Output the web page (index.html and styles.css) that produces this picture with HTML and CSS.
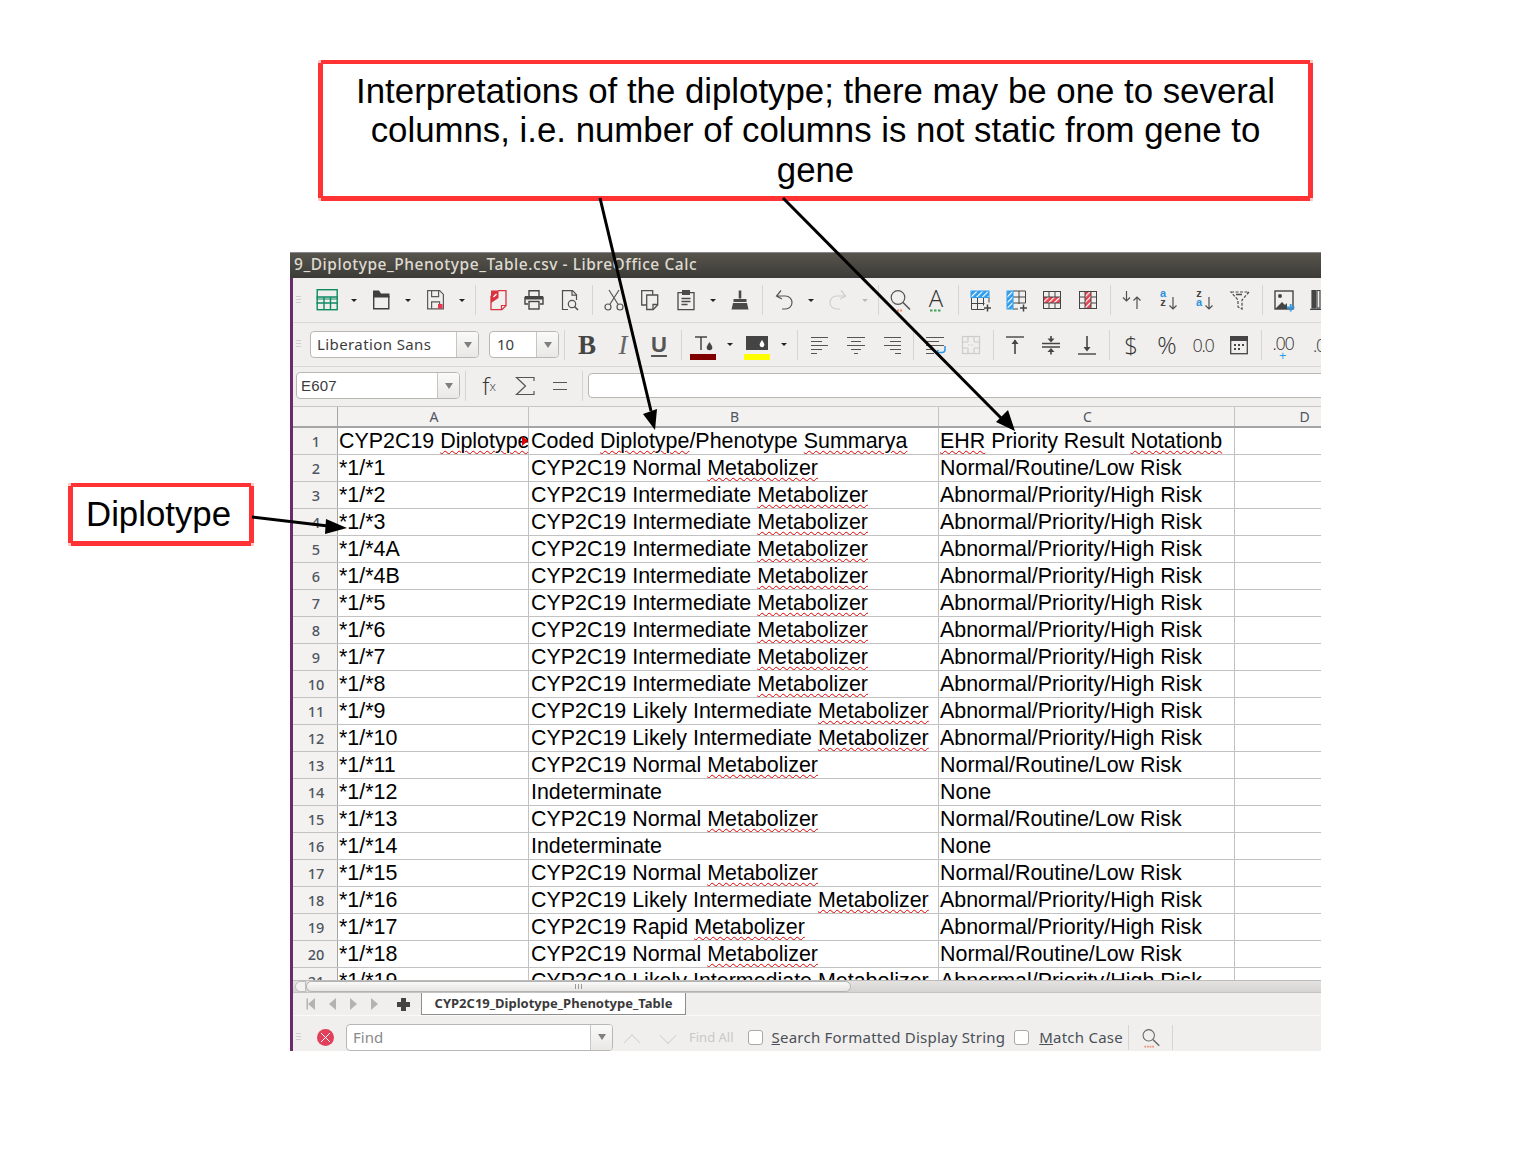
FILE: index.html
```html
<!DOCTYPE html>
<html lang="en">

<head>
    <meta charset="UTF-8">
    <title>Diplotype Phenotype Table</title>
    <link rel="stylesheet" href="styles.css">
</head>

<body>
    <svg class="defs" width="0" height="0">
        <defs>
            <pattern id="hatch-blue" width="4" height="4" patternUnits="userSpaceOnUse" patternTransform="rotate(45)">
                <rect width="4" height="4" fill="#2d9bec"/><rect width="1.2" height="4" fill="#fff"/>
            </pattern>
            <pattern id="hatch-red" width="4" height="4" patternUnits="userSpaceOnUse" patternTransform="rotate(45)">
                <rect width="4" height="4" fill="#e8414f"/><rect width="1.2" height="4" fill="#fff"/>
            </pattern>
            <symbol id="i-calc" viewBox="0 0 24 24"><g fill="none" stroke="#0c8b63" stroke-width="1.4"><rect x="2.200" y="1.700" width="20" height="20"/><path d="M1.500 9h21.500M1.500 15h21.500M9 9v13M15.500 9v13"/><path d="M1.500 11h21.500" stroke-width="1"/></g></symbol>
            <symbol id="i-folder" viewBox="0 0 24 24"><path d="M4 2.500h6l2 3h8.500v4H4z" fill="#3f3f3f"/><path d="M4.700 8v12.800h15.100V8" fill="none" stroke="#3f3f3f" stroke-width="1.400"/></symbol>
            <symbol id="i-save" viewBox="0 0 24 24"><g fill="none" stroke="#5a5a5a" stroke-width="1.200"><path d="M4.600 2.600h12l3.800 3.800v14.400H4.600z"/><path d="M8.600 2.600v6h7v-6M8.600 20.800v-7h8v7"/></g><rect x="15" y="16" width="4.500" height="4.500" fill="#e8344e"/></symbol>
            <symbol id="i-pdf" viewBox="0 0 24 24"><path d="M12 2.700h8v15l-4 4H5v-14" fill="none" stroke="#d8333f" stroke-width="1.300"/><path d="M5 2.500h7.500v7.500L5 15z" fill="#d8333f"/><path d="M7.500 9l3-3" stroke="#fff" stroke-width="1.200"/><path d="M15.500 21.500v-4h4.500" fill="none" stroke="#d8333f" stroke-width="1.200"/></symbol>
            <symbol id="i-print" viewBox="0 0 24 24"><g fill="none" stroke="#454545" stroke-width="1.400"><path d="M7 8V2.800h10V8"/><path d="M6 16H3V9.500h18V16h-3"/><rect x="7" y="13.500" width="10" height="7.500" fill="#f0efed"/></g><rect x="3" y="8" width="18" height="3.500" fill="#454545"/></symbol>
            <symbol id="i-preview" viewBox="0 0 24 24"><g fill="none" stroke="#4e4e4e" stroke-width="1.200"><path d="M10 21.500H4.500V2.700h10l4 4V12"/><path d="M14 2.700v4.500h4.500"/><circle cx="14" cy="16" r="3.700"/><path d="M16.700 18.700l3.300 3.300" stroke-width="1.600"/></g></symbol>
            <symbol id="i-cut" viewBox="0 0 24 24"><g fill="none" stroke="#555" stroke-width="1.200"><circle cx="6" cy="19" r="3"/><circle cx="18" cy="19" r="3"/><path d="M7.800 16.500L17 2M16.200 16.500L7 2"/></g></symbol>
            <symbol id="i-copy" viewBox="0 0 24 24"><g fill="none" stroke="#505050" stroke-width="1.300"><path d="M8.500 17H3.700V2.700h11v4"/><path d="M8.700 7h11v10l-4.500 4.500H8.700z" fill="#f0efed"/><path d="M15 21v-4.500h4.500"/></g></symbol>
            <symbol id="i-paste" viewBox="0 0 24 24"><g fill="none" stroke="#4b4b4b" stroke-width="1.300"><path d="M8 4.700H4v17h16v-17h-4"/><path d="M7.500 10.500h9M7.500 13.500h9M7.500 16.500h6"/></g><rect x="8" y="2" width="8" height="5" fill="#4b4b4b"/></symbol>
            <symbol id="i-brush" viewBox="0 0 24 24"><path d="M10.700 2.500h2.600v8h-2.600z" fill="#4a4a4a"/><path d="M5.500 11h13v3h-13z" fill="#4a4a4a"/><path d="M5 15h14l1.500 6.500h-17z" fill="#4a4a4a"/></symbol>
            <symbol id="i-undo" viewBox="0 0 24 24"><path d="M9 2.500L4.500 8 10 11M5 8h8.500a6.500 6.500 0 0 1 0 13H10" fill="none" stroke="#555" stroke-width="1.200"/></symbol>
            <symbol id="i-redo" viewBox="0 0 24 24"><path d="M15 2.500L19.500 8 14 11M19 8h-8.500a6.500 6.500 0 0 0 0 13H14" fill="none" stroke="#cfcecc" stroke-width="1.200"/></symbol>
            <symbol id="i-find" viewBox="0 0 24 24"><g fill="none" stroke="#555" stroke-width="1.200"><circle cx="10" cy="9.500" r="6.800"/><path d="M15 14.500l7 7" stroke-width="1.600"/></g><path d="M6 22.500h2M9 22.500h2M12 22.500h2" stroke="#f08a6a" stroke-width="2"/></symbol>
            <symbol id="i-spell" viewBox="0 0 24 24"><text x="12" y="19" text-anchor="middle" class="svg-a">A</text><path d="M6 22.500h2.500M10 22.500h2.500M14 22.500h2.500" stroke="#3fa35a" stroke-width="2"/></symbol>
            <symbol id="i-rowins" viewBox="0 0 24 24"><g fill="none" stroke="#454545" stroke-width="1"><path d="M3.500 9.500v12h13M3.500 15.500h13M9.500 9.500v12M15.500 9.500v8M21 9.500v5"/></g><rect x="3" y="3" width="18" height="6.500" fill="url(#hatch-blue)" stroke="#2d9bec"/><path d="M16 20h7M19.500 16.500v7" stroke="#454545" stroke-width="1.500"/></symbol>
            <symbol id="i-colins" viewBox="0 0 24 24"><g fill="none" stroke="#454545" stroke-width="1"><path d="M9 3h12.500v12M9 9h12.500M9 15h12.500M15 3v13M9 21h5"/></g><rect x="3" y="3" width="6" height="18" fill="url(#hatch-blue)" stroke="#2d9bec"/><path d="M16 20h7M19.500 16.500v7" stroke="#454545" stroke-width="1.500"/></symbol>
            <symbol id="i-delrow" viewBox="0 0 24 24"><rect x="3" y="9" width="18" height="6" fill="url(#hatch-red)"/><g fill="none" stroke="#454545" stroke-width="1"><rect x="3.500" y="3.500" width="17" height="17"/><path d="M3.500 9h17M3.500 15h17M9 3.500V9M15 3.500V9M9 15v5.500M15 15v5.500"/></g></symbol>
            <symbol id="i-delcol" viewBox="0 0 24 24"><rect x="9" y="3" width="6" height="18" fill="url(#hatch-red)"/><g fill="none" stroke="#454545" stroke-width="1"><rect x="3.500" y="3.500" width="17" height="17"/><path d="M9 3.500v17M15 3.500v17M3.500 9H9M3.500 15H9M15 9h5.500M15 15h5.500"/></g></symbol>
            <symbol id="i-sort" viewBox="0 0 24 24"><path d="M6.500 3v10M3 9.500L6.500 13 10 9.500M17 21V9M13.500 12.500L17 9l3.500 3.500" fill="none" stroke="#505050" stroke-width="1.200"/></symbol>
            <symbol id="i-az" viewBox="0 0 24 24"><text x="7" y="9" text-anchor="middle" class="svg-s blue">a</text><text x="7" y="18" text-anchor="middle" class="svg-s">z</text><path d="M17 9v12M13.500 17.500L17 21l3.500-3.500" fill="none" stroke="#505050" stroke-width="1.200"/></symbol>
            <symbol id="i-za" viewBox="0 0 24 24"><text x="7" y="9" text-anchor="middle" class="svg-s">z</text><text x="7" y="18" text-anchor="middle" class="svg-s blue">a</text><path d="M17 9v12M13.500 17.500L17 21l3.500-3.500" fill="none" stroke="#505050" stroke-width="1.200"/></symbol>
            <symbol id="i-filter" viewBox="0 0 24 24"><path d="M3 4h18l-7 8v9l-4-2v-7z" fill="none" stroke="#4b4b4b" stroke-width="1.200" stroke-dasharray="3 1.500"/><path d="M8 6.500l6 0" stroke="#4b4b4b" stroke-width="1.500"/></symbol>
            <symbol id="i-image" viewBox="0 0 24 24"><rect x="3" y="3" width="18" height="18" fill="none" stroke="#454545" stroke-width="1.400"/><circle cx="8" cy="8" r="2" fill="#454545"/><path d="M3 21l7-7 3 3 2-2v6z" fill="#454545"/><path d="M15 19.500h7.500M18.700 16v7.500" stroke="#2d9bec" stroke-width="1.800"/></symbol>
            <symbol id="i-chart" viewBox="0 0 24 24"><path d="M4 2.500h3.500V20H4zM9 2.500h3V20H9zM2 21.300h20" fill="none" stroke="#454545" stroke-width="1.200"/><path d="M4 2.500h3.500V20H4z" fill="#454545"/></symbol>
            <symbol id="i-fcolor" viewBox="0 0 24 24"><path d="M4 4h12M10 4v13" fill="none" stroke="#454545" stroke-width="1.500"/><path d="M18.500 9c2 3 2.800 4.300 2.800 5.500a2.800 2.800 0 0 1-5.600 0c0-1.200.8-2.500 2.800-5.500z" fill="#454545"/></symbol>
            <symbol id="i-bcolor" viewBox="0 0 24 24"><rect x="1" y="3" width="22" height="14" fill="#444"/><path d="M17 7c1.700 2.500 2.400 3.700 2.400 4.800a2.400 2.400 0 0 1-4.800 0c0-1.100.7-2.300 2.400-4.800z" fill="#fff"/></symbol>
            <symbol id="i-left" viewBox="0 0 24 24"><path d="M3 4.500h17M3 8.500h11M3 12.500h17M3 16.500h11M3 20.500h6" fill="none" stroke="#555" stroke-width="1.200"/></symbol>
            <symbol id="i-center" viewBox="0 0 24 24"><path d="M3 4.500h18M7 8.500h10M3 12.500h18M7 16.500h10M10 20.500h4" fill="none" stroke="#555" stroke-width="1.200"/></symbol>
            <symbol id="i-right" viewBox="0 0 24 24"><path d="M4 4.500h17M10 8.500h11M4 12.500h17M10 16.500h11M15 20.500h6" fill="none" stroke="#555" stroke-width="1.200"/></symbol>
            <symbol id="i-wrap" viewBox="0 0 24 24"><path d="M3 4.500h18M3 8.500h13M3 12.500h18M3 16.500h8M3 20.500h8" fill="none" stroke="#555" stroke-width="1.200"/><path d="M13 19.500h6a3 3 0 0 0 3-3V13M15.500 17L13 19.500l2.500 2.500" fill="none" stroke="#2d9bec" stroke-width="1.600"/></symbol>
            <symbol id="i-merge" viewBox="0 0 24 24"><g fill="none" stroke="#cdccca" stroke-width="1.200"><rect x="3.500" y="3.500" width="17" height="17"/><path d="M3.500 9H9M15 9h5.500M3.500 15H9M15 15h5.500M9 3.500V9M15 3.500V9M9 15v5.500M15 15v5.500"/><path d="M9 12h6" stroke-dasharray="1.500 1.500"/></g></symbol>
            <symbol id="i-top" viewBox="0 0 24 24"><path d="M3 4h18" stroke="#454545" stroke-width="1.400"/><path d="M12 21V7" stroke="#454545" stroke-width="1.600"/><path d="M12 6.500l3.500 4.500h-7z" fill="#454545"/></symbol>
            <symbol id="i-middle" viewBox="0 0 24 24"><path d="M3 10.500h18M3 14h18" stroke="#454545" stroke-width="1.400"/><path d="M12 3v5M12 16.500v5" stroke="#454545" stroke-width="1.600"/><path d="M12 9.500L8.500 5.500h7zM12 15l3.500 4h-7z" fill="#454545"/></symbol>
            <symbol id="i-bottom" viewBox="0 0 24 24"><path d="M3 21h18" stroke="#454545" stroke-width="1.400"/><path d="M12 3v13" stroke="#454545" stroke-width="1.600"/><path d="M12 18.500L8.500 14h7z" fill="#454545"/></symbol>
            <symbol id="i-date" viewBox="0 0 24 24"><rect x="3.700" y="3.700" width="16.600" height="17" fill="none" stroke="#454545" stroke-width="1.300"/><path d="M3 3h18v5H3z" fill="#454545"/><path d="M7 11h2v2H7zM11 11h2v2h-2zM15 11h2v2h-2zM7 15h2v2H7zM11 15h2v2h-2z" fill="#454545"/></symbol>
            <symbol id="i-search" viewBox="0 0 24 24"><g fill="none" stroke="#666" stroke-width="1.200"><circle cx="10" cy="9.500" r="6.500"/><path d="M15 14.500l7 7" stroke-width="1.600"/></g><path d="M5 22.500h2M8 22.500h2M11 22.500h2M14 22.500h2" stroke="#f0907a" stroke-width="2"/></symbol>
            <symbol id="i-sigma" viewBox="0 0 24 24"><path d="M21 7V3.500H3.500l9 8.500-9 8.500H21V17" fill="none" stroke="#555" stroke-width="1.200"/></symbol>
            <symbol id="i-equals" viewBox="0 0 24 24"><path d="M5 8.500h14M5 15.500h14" fill="none" stroke="#555" stroke-width="1.200"/></symbol>
        </defs>
    </svg>

    <div class="callout callout-top">Interpretations of the diplotype; there may be one to several columns, i.e. number of columns is not static from gene to gene</div>
    <div class="callout callout-left">Diplotype</div>

    <div class="window">
        <div class="titlebar">9_Diplotype_Phenotype_Table.csv - LibreOffice Calc</div>

        <div class="main">
            <div class="toolbar">
                <span class="grip"></span>
                <span class="btn first"><svg class="ic"><use href="#i-calc"/></svg></span><span class="dd"></span>
                <span class="btn"><svg class="ic"><use href="#i-folder"/></svg></span><span class="dd"></span>
                <span class="btn"><svg class="ic"><use href="#i-save"/></svg></span><span class="dd"></span>
                <span class="sep w9"></span>
                <span class="btn"><svg class="ic"><use href="#i-pdf"/></svg></span>
                <span class="btn"><svg class="ic"><use href="#i-print"/></svg></span>
                <span class="btn"><svg class="ic"><use href="#i-preview"/></svg></span>
                <span class="sep"></span>
                <span class="btn"><svg class="ic"><use href="#i-cut"/></svg></span>
                <span class="btn"><svg class="ic"><use href="#i-copy"/></svg></span>
                <span class="btn"><svg class="ic"><use href="#i-paste"/></svg></span><span class="dd"></span>
                <span class="btn"><svg class="ic"><use href="#i-brush"/></svg></span>
                <span class="sep"></span>
                <span class="btn"><svg class="ic"><use href="#i-undo"/></svg></span><span class="dd"></span>
                <span class="btn"><svg class="ic"><use href="#i-redo"/></svg></span><span class="dd off"></span>
                <span class="sep"></span>
                <span class="btn"><svg class="ic"><use href="#i-find"/></svg></span>
                <span class="btn"><svg class="ic"><use href="#i-spell"/></svg></span>
                <span class="sep"></span>
                <span class="btn"><svg class="ic"><use href="#i-rowins"/></svg></span>
                <span class="btn"><svg class="ic"><use href="#i-colins"/></svg></span>
                <span class="btn"><svg class="ic"><use href="#i-delrow"/></svg></span>
                <span class="btn"><svg class="ic"><use href="#i-delcol"/></svg></span>
                <span class="sep"></span>
                <span class="btn"><svg class="ic"><use href="#i-sort"/></svg></span>
                <span class="btn"><svg class="ic"><use href="#i-az"/></svg></span>
                <span class="btn"><svg class="ic"><use href="#i-za"/></svg></span>
                <span class="btn"><svg class="ic"><use href="#i-filter"/></svg></span>
                <span class="sep"></span>
                <span class="btn"><svg class="ic"><use href="#i-image"/></svg></span>
                <span class="btn"><svg class="ic"><use href="#i-chart"/></svg></span>
            </div>

            <div class="toolbar second">
                <span class="grip"></span>
                <span class="combo font-combo"><span class="combo-text">Liberation Sans</span><span class="combo-arrow"></span></span>
                <span class="combo size-combo"><span class="combo-text">10</span><span class="combo-arrow"></span></span>
                <span class="sep w10"></span>
                <span class="btn glyph bold">B</span>
                <span class="btn glyph italic">I</span>
                <span class="btn glyph under">U</span>
                <span class="sep"></span>
                <span class="btn swatch dark-red"><svg class="ic"><use href="#i-fcolor"/></svg></span><span class="dd"></span>
                <span class="btn swatch yellow"><svg class="ic"><use href="#i-bcolor"/></svg></span><span class="dd"></span>
                <span class="sep w9"></span>
                <span class="btn"><svg class="ic"><use href="#i-left"/></svg></span>
                <span class="btn"><svg class="ic"><use href="#i-center"/></svg></span>
                <span class="btn"><svg class="ic"><use href="#i-right"/></svg></span>
                <span class="sep w7"></span>
                <span class="btn"><svg class="ic"><use href="#i-wrap"/></svg></span>
                <span class="btn"><svg class="ic"><use href="#i-merge"/></svg></span>
                <span class="sep"></span>
                <span class="btn"><svg class="ic"><use href="#i-top"/></svg></span>
                <span class="btn"><svg class="ic"><use href="#i-middle"/></svg></span>
                <span class="btn"><svg class="ic"><use href="#i-bottom"/></svg></span>
                <span class="sep"></span>
                <span class="btn glyph dollar">$</span>
                <span class="btn glyph percent">%</span>
                <span class="btn glyph number">0.0</span>
                <span class="btn"><svg class="ic"><use href="#i-date"/></svg></span>
                <span class="sep"></span>
                <span class="btn glyph number plus">.00</span>
                <span class="btn glyph number">.0</span>
            </div>

            <div class="formulabar">
                <span class="combo name-combo"><span class="combo-text">E607</span><span class="combo-arrow"></span></span>
                <span class="sep w11"></span>
                <span class="btn glyph fx">f<sub>x</sub></span>
                <span class="btn"><svg class="ic"><use href="#i-sigma"/></svg></span>
                <span class="btn narrow"><svg class="ic"><use href="#i-equals"/></svg></span>
                <span class="sep w11"></span>
                <span class="formula-input"></span>
            </div>

            <div class="sheet">
                <div class="row head"><div class="rowhead"></div><div class="cell">A</div><div class="cell">B</div><div class="cell">C</div><div class="cell">D</div></div>
                <div class="rows">
                    <div class="row"><div class="rowhead">1</div><div class="cell">CYP2C19 <em>Diplotype</em><i class="overflow-mark"></i></div><div class="cell pad">Coded <em>Diplotype</em>/Phenotype <em>Summarya</em></div><div class="cell"><em>EHR</em> Priority Result <em>Notationb</em></div><div class="cell"></div></div>
                    <div class="row"><div class="rowhead">2</div><div class="cell">*1/*1</div><div class="cell pad">CYP2C19 Normal <em>Metabolizer</em></div><div class="cell">Normal/Routine/Low Risk</div><div class="cell"></div></div>
                    <div class="row"><div class="rowhead">3</div><div class="cell">*1/*2</div><div class="cell pad">CYP2C19 Intermediate <em>Metabolizer</em></div><div class="cell">Abnormal/Priority/High Risk</div><div class="cell"></div></div>
                    <div class="row"><div class="rowhead">4</div><div class="cell">*1/*3</div><div class="cell pad">CYP2C19 Intermediate <em>Metabolizer</em></div><div class="cell">Abnormal/Priority/High Risk</div><div class="cell"></div></div>
                    <div class="row"><div class="rowhead">5</div><div class="cell">*1/*4A</div><div class="cell pad">CYP2C19 Intermediate <em>Metabolizer</em></div><div class="cell">Abnormal/Priority/High Risk</div><div class="cell"></div></div>
                    <div class="row"><div class="rowhead">6</div><div class="cell">*1/*4B</div><div class="cell pad">CYP2C19 Intermediate <em>Metabolizer</em></div><div class="cell">Abnormal/Priority/High Risk</div><div class="cell"></div></div>
                    <div class="row"><div class="rowhead">7</div><div class="cell">*1/*5</div><div class="cell pad">CYP2C19 Intermediate <em>Metabolizer</em></div><div class="cell">Abnormal/Priority/High Risk</div><div class="cell"></div></div>
                    <div class="row"><div class="rowhead">8</div><div class="cell">*1/*6</div><div class="cell pad">CYP2C19 Intermediate <em>Metabolizer</em></div><div class="cell">Abnormal/Priority/High Risk</div><div class="cell"></div></div>
                    <div class="row"><div class="rowhead">9</div><div class="cell">*1/*7</div><div class="cell pad">CYP2C19 Intermediate <em>Metabolizer</em></div><div class="cell">Abnormal/Priority/High Risk</div><div class="cell"></div></div>
                    <div class="row"><div class="rowhead">10</div><div class="cell">*1/*8</div><div class="cell pad">CYP2C19 Intermediate <em>Metabolizer</em></div><div class="cell">Abnormal/Priority/High Risk</div><div class="cell"></div></div>
                    <div class="row"><div class="rowhead">11</div><div class="cell">*1/*9</div><div class="cell pad">CYP2C19 Likely Intermediate <em>Metabolizer</em></div><div class="cell">Abnormal/Priority/High Risk</div><div class="cell"></div></div>
                    <div class="row"><div class="rowhead">12</div><div class="cell">*1/*10</div><div class="cell pad">CYP2C19 Likely Intermediate <em>Metabolizer</em></div><div class="cell">Abnormal/Priority/High Risk</div><div class="cell"></div></div>
                    <div class="row"><div class="rowhead">13</div><div class="cell">*1/*11</div><div class="cell pad">CYP2C19 Normal <em>Metabolizer</em></div><div class="cell">Normal/Routine/Low Risk</div><div class="cell"></div></div>
                    <div class="row"><div class="rowhead">14</div><div class="cell">*1/*12</div><div class="cell pad">Indeterminate</div><div class="cell">None</div><div class="cell"></div></div>
                    <div class="row"><div class="rowhead">15</div><div class="cell">*1/*13</div><div class="cell pad">CYP2C19 Normal <em>Metabolizer</em></div><div class="cell">Normal/Routine/Low Risk</div><div class="cell"></div></div>
                    <div class="row"><div class="rowhead">16</div><div class="cell">*1/*14</div><div class="cell pad">Indeterminate</div><div class="cell">None</div><div class="cell"></div></div>
                    <div class="row"><div class="rowhead">17</div><div class="cell">*1/*15</div><div class="cell pad">CYP2C19 Normal <em>Metabolizer</em></div><div class="cell">Normal/Routine/Low Risk</div><div class="cell"></div></div>
                    <div class="row"><div class="rowhead">18</div><div class="cell">*1/*16</div><div class="cell pad">CYP2C19 Likely Intermediate <em>Metabolizer</em></div><div class="cell">Abnormal/Priority/High Risk</div><div class="cell"></div></div>
                    <div class="row"><div class="rowhead">19</div><div class="cell">*1/*17</div><div class="cell pad">CYP2C19 Rapid <em>Metabolizer</em></div><div class="cell">Abnormal/Priority/High Risk</div><div class="cell"></div></div>
                    <div class="row"><div class="rowhead">20</div><div class="cell">*1/*18</div><div class="cell pad">CYP2C19 Normal <em>Metabolizer</em></div><div class="cell">Normal/Routine/Low Risk</div><div class="cell"></div></div>
                    <div class="row"><div class="rowhead">21</div><div class="cell">*1/*19</div><div class="cell pad">CYP2C19 Likely Intermediate <em>Metabolizer</em></div><div class="cell">Abnormal/Priority/High Risk</div><div class="cell"></div></div>
                </div>
            </div>

            <div class="scrollbar">
                <span class="scroll-left"></span>
                <span class="scroll-thumb"></span>
            </div>

            <div class="tabbar">
                <div class="tab-nav">
                    <span class="nav nav-first"></span>
                    <span class="nav nav-prev"></span>
                    <span class="nav nav-next"></span>
                    <span class="nav nav-last"></span>
                    <span class="nav-add"></span>
                </div>
                <div class="tab">CYP2C19_Diplotype_Phenotype_Table</div>
            </div>

            <div class="findbar">
                <span class="grip"></span>
                <span class="close-find"></span>
                <span class="combo find-combo"><span class="combo-text">Find</span><span class="combo-arrow"></span></span>
                <span class="chev up"></span>
                <span class="chev down"></span>
                <span class="find-all">Find All</span>
                <span class="check"></span>
                <span class="find-label"><u>S</u>earch Formatted Display String</span>
                <span class="check second-check"></span>
                <span class="find-label"><u>M</u>atch Case</span>
                <span class="sep small w11"></span>
                <svg class="ic search"><use href="#i-search"/></svg>
                <span class="sep small w11"></span>
            </div>
        </div>
    </div>

    <svg class="arrows" width="1536" height="1152" viewBox="0 0 1536 1152">
        <g stroke="#000" stroke-width="3" fill="none">
            <path d="M600 198L651 411"/>
            <path d="M783 198L1003 420"/>
            <path d="M252 517L328 526"/>
        </g>
        <g fill="#000">
            <path d="M655 430L643 414L657 409z"/>
            <path d="M1015 431L996 422L1008 410z"/>
            <path d="M347 528L326 519L325 534z"/>
        </g>
    </svg>
</body>

</html>
```

FILE: styles.css
```css
html,
body {
    margin: 0;
    padding: 0;
    background: #fff;
}

body {
    position: relative;
    width: 1536px;
    height: 1152px;
    overflow: hidden;
    font-family: "Liberation Sans", Arial, sans-serif;
}

.defs {
    position: absolute;
}

.svg-a {
    font-family: "Open Sans", sans-serif;
    font-weight: 300;
    font-size: 24px;
    fill: #333;
}

.svg-s {
    font-family: "Liberation Sans", sans-serif;
    font-size: 11px;
    font-weight: bold;
    fill: #444;
}

.svg-s.blue {
    fill: #2d8fe0;
}

/* red note boxes */
.callout {
    position: absolute;
    box-sizing: border-box;
    background: #fff;
    border: 5px solid #ff3333;
    border-top-width: 4px;
    color: #000;
    font-size: 34.800px;
    line-height: 39.400px;
    z-index: 2;
}

/* pale drag handles left on the corners of the shape */
.callout::after {
    content: "";
    position: absolute;
    left: -5px;
    right: -5px;
    top: -4px;
    bottom: -5px;
    background:
        linear-gradient(#ffc9c9, #ffc9c9) 0 0 / 3px 3px no-repeat,
        linear-gradient(#ffc9c9, #ffc9c9) 100% 0 / 3px 3px no-repeat,
        linear-gradient(#ffc9c9, #ffc9c9) 0 100% / 3px 3px no-repeat,
        linear-gradient(#ffc9c9, #ffc9c9) 100% 100% / 3px 3px no-repeat;
}

.callout-top {
    left: 318px;
    top: 60px;
    width: 995px;
    height: 141px;
    padding: 7px 24px 0;
    text-align: center;
}

.callout-left {
    left: 68px;
    top: 483px;
    width: 186px;
    height: 63px;
    padding: 7px 0 0 13px;
}

.arrows {
    position: absolute;
    left: 0;
    top: 0;
    z-index: 3;
    pointer-events: none;
}

/* the calc window */
.window {
    position: absolute;
    left: 290px;
    top: 252px;
    width: 1031px;
    height: 799px;
    overflow: hidden;
    display: flex;
    flex-direction: column;
}

.titlebar {
    height: 26px;
    flex: none;
    box-sizing: border-box;
    padding: 1px 0 0 4px;
    background: linear-gradient(#57544c, #3c3b37);
    border-top: 1px solid #888;
    color: #dfdbd2;
    font-family: "Noto Sans", sans-serif;
    font-size: 15.500px;
    font-weight: 500;
    line-height: 21px;
    letter-spacing: 0.55px;
    white-space: nowrap;
}

.main {
    flex: 1;
    min-height: 0;
    display: flex;
    flex-direction: column;
    border-left: 3px solid #6b2a6f;
    background: #f0efed;
    color: #454545;
    font-family: "Noto Sans", sans-serif;
}

.toolbar,
.formulabar,
.findbar {
    flex: none;
    display: flex;
    align-items: center;
    box-sizing: border-box;
    white-space: nowrap;
}

.toolbar {
    height: 45px;
    border-bottom: 1px solid #d9d8d6;
}

.toolbar.second {
    height: 44px;
}

.grip {
    flex: none;
    width: 5px;
    height: 9px;
    margin: 0 8px 0 3px;
    background: repeating-linear-gradient(#cfcecc 0 1px, transparent 1px 3px);
}

.toolbar.second .grip {
    margin-right: 9px;
}

.btn {
    flex: none;
    width: 36px;
    height: 30px;
    display: flex;
    align-items: center;
    justify-content: center;
    position: relative;
}

.btn.narrow {
    width: 34px;
}

.ic {
    width: 24px;
    height: 24px;
    flex: none;
}

.dd {
    flex: none;
    width: 18px;
    height: 30px;
    display: flex;
    align-items: center;
    justify-content: center;
}

.dd::after {
    content: "";
    border-left: 3.500px solid transparent;
    border-right: 3.500px solid transparent;
    border-top: 3.500px solid #222;
}

.dd.off::after {
    border-top-color: #bbb;
}

.sep {
    flex: none;
    width: 8px;
    height: 30px;
    display: flex;
    justify-content: center;
}

.sep::after {
    content: "";
    width: 1px;
    height: 100%;
    background: #d6d5d3;
}

.sep.w7 { width: 7px; }
.sep.w9 { width: 9px; }
.sep.w10 { width: 10px; }
.sep.w11 { width: 11px; }

/* drop down boxes */
.combo {
    flex: none;
    box-sizing: border-box;
    height: 27px;
    display: flex;
    background: #fff;
    border: 1px solid #b8b7b3;
    border-radius: 4px;
    font-size: 15px;
    line-height: 25px;
    color: #3c3c3c;
}

.combo-text {
    flex: 1;
    padding-left: 6px;
}

.combo-arrow {
    flex: none;
    width: 21px;
    display: flex;
    align-items: center;
    justify-content: center;
    background: linear-gradient(#fafafa, #e9e8e6);
    border-left: 1px solid #c6c5c1;
    border-radius: 0 3px 3px 0;
}

.combo-arrow::after {
    content: "";
    border-left: 4px solid transparent;
    border-right: 4px solid transparent;
    border-top: 6px solid #807f7d;
}

.font-combo {
    width: 169px;
    margin-right: 10px;
    letter-spacing: 0.4px;
}

.size-combo {
    width: 70px;
}

.size-combo .combo-text {
    padding-left: 7px;
}

.name-combo {
    width: 164px;
    margin-left: 3px;
}

.name-combo .combo-text {
    padding-left: 4px;
    letter-spacing: 0.2px;
    font-family: "Liberation Sans", sans-serif;
}

/* text look-alike buttons */
.glyph {
    color: #454545;
    font-family: "Liberation Serif", serif;
    line-height: 30px;
}

.bold {
    font-size: 27px;
    font-weight: bold;
}

.italic {
    font-size: 27px;
    font-style: italic;
    color: #666;
}

.under {
    font-family: "Liberation Sans", sans-serif;
    font-size: 22px;
    font-weight: bold;
    text-decoration: underline;
    text-underline-offset: 3px;
    color: #555;
}

.dollar {
    font-family: "Open Sans", sans-serif;
    font-weight: 300;
    font-size: 24px;
    color: #333;
}

.percent {
    font-family: "Open Sans", sans-serif;
    font-weight: 300;
    font-size: 24px;
    color: #333;
}

.number {
    font-family: "Open Sans", sans-serif;
    font-weight: 300;
    font-size: 18px;
    letter-spacing: -1.200px;
    color: #333;
}

.plus {
    align-items: flex-start;
    line-height: 26px;
}

.plus::after {
    content: "+";
    position: absolute;
    left: 14px;
    top: 12px;
    font-size: 13px;
    letter-spacing: 0;
    font-weight: 400;
    color: #2d9bec;
}

.swatch::after {
    content: "";
    position: absolute;
    left: 5px;
    bottom: 0;
    width: 26px;
    height: 6px;
}

.dark-red::after {
    background: #800000;
}

.yellow::after {
    background: #ffff00;
}

.formulabar {
    height: 39px;
    padding-bottom: 2px;
}

.fx {
    font-family: "Open Sans", sans-serif;
    font-weight: 300;
    font-size: 24px;
    color: #333;
}

.fx sub {
    font-size: 13px;
    line-height: 0;
}

.formula-input {
    flex: none;
    box-sizing: border-box;
    width: 900px;
    height: 25px;
    background: #fff;
    border: 1px solid #b8b7b3;
    border-radius: 4px;
}

/* the grid */
.sheet {
    flex: none;
    height: 574px;
    overflow: hidden;
    background: #fff;
    font-family: "Liberation Sans", sans-serif;
}

.row {
    display: grid;
    grid-template-columns: 45px 191px 410px 296px 138px;
    height: 27px;
    box-sizing: border-box;
    border-bottom: 1px solid #c2c2c2;
}

.row.head {
    height: 22px;
    border-top: 1px solid #c8c7c5;
    border-bottom: 2px solid #a5a5a5;
    background: #f3f2f1;
}

.rows {
    height: 552px;
    overflow: hidden;
}

.head .cell {
    padding: 0 0 0 2px;
    background: none;
    text-align: center;
    font-family: "Noto Sans", sans-serif;
    font-size: 14px;
    line-height: 19px;
    color: #4f5560;
}

.rowhead {
    box-sizing: border-box;
    padding-left: 2px;
    background: #f3f2f1;
    border-right: 1px solid #a5a5a5;
    text-align: center;
    font-family: "Noto Sans", sans-serif;
    font-size: 14.500px;
    font-weight: 500;
    line-height: 26px;
    color: #4f5560;
}

.cell {
    position: relative;
    overflow: hidden;
    box-sizing: border-box;
    padding-left: 1px;
    border-right: 1px solid #c2c2c2;
    color: #000;
    font-size: 21.430px;
    line-height: 26px;
    white-space: nowrap;
}

.cell.pad {
    padding-left: 2px;
}

.cell em {
    font-style: normal;
    text-decoration: underline wavy #e00000 1px;
    text-underline-offset: 2px;
}

.overflow-mark {
    position: absolute;
    right: 0;
    top: 8px;
    border-top: 5px solid transparent;
    border-bottom: 5px solid transparent;
    border-left: 6px solid #e00000;
}

/* bottom strips */
.scrollbar {
    flex: none;
    height: 13px;
    box-sizing: border-box;
    display: flex;
    align-items: stretch;
    padding-left: 2px;
    background: linear-gradient(#e4e3e1, #d4d3d1);
    border-top: 1px solid #bdbcba;
    border-bottom: 1px solid #c4c3c1;
}

.scroll-left {
    flex: none;
    width: 11px;
    box-sizing: border-box;
    background: #f2f1f0;
    border: 1px solid #bdbcba;
    border-radius: 6px 0 0 6px;
}

.scroll-thumb {
    flex: none;
    width: 545px;
    box-sizing: border-box;
    border: 1px solid #b3b2b0;
    border-radius: 6px;
    background:
        repeating-linear-gradient(90deg, #9a9997 0 1px, transparent 1px 3px) center / 7px 5px no-repeat,
        linear-gradient(#fafafa, #e6e5e3);
}

.tabbar {
    flex: none;
    height: 23px;
    display: flex;
    box-sizing: border-box;
    border-bottom: 1px solid #faf9f8;
}

.tab-nav {
    flex: none;
    width: 128px;
    display: flex;
    align-items: center;
    padding-left: 8px;
    box-sizing: border-box;
}

.nav {
    flex: none;
    width: 21px;
    height: 12px;
    display: flex;
    justify-content: center;
    align-items: center;
}

.nav-first::before,
.nav-prev::before {
    content: "";
    border-top: 6px solid transparent;
    border-bottom: 6px solid transparent;
    border-right: 7px solid #b4b3b1;
}

.nav-next::before,
.nav-last::before {
    content: "";
    border-top: 6px solid transparent;
    border-bottom: 6px solid transparent;
    border-left: 7px solid #b4b3b1;
}

.nav-first::before {
    box-shadow: -2px 0 0 -0.500px #b4b3b1;
}

.nav-add {
    flex: none;
    width: 13px;
    height: 13px;
    margin-left: 12px;
    background:
        linear-gradient(#444, #444) center / 5px 100% no-repeat,
        linear-gradient(#444, #444) center / 100% 5px no-repeat;
}

.tab {
    flex: none;
    width: 265px;
    box-sizing: border-box;
    text-align: center;
    background: #fff;
    border: 1px solid #8f8e8c;
    border-top: none;
    color: #3a3a3a;
    font-size: 13px;
    font-weight: 700;
    line-height: 21px;
}

.findbar {
    height: 35px;
    padding-top: 7px;
    font-size: 15px;
}

.findbar .grip {
    margin-right: 16px;
}

.close-find {
    flex: none;
    width: 17px;
    height: 17px;
    border-radius: 50%;
    margin-right: 12px;
    background:
        linear-gradient(45deg, transparent 46%, #fff 46% 54%, transparent 54%) center / 9px 9px no-repeat,
        linear-gradient(-45deg, transparent 46%, #fff 46% 54%, transparent 54%) center / 9px 9px no-repeat,
        #e0405a;
}

.find-combo {
    width: 267px;
    color: #8a8a8a;
}

.chev {
    flex: none;
    width: 12px;
    height: 12px;
    margin-left: 12px;
    box-sizing: border-box;
    border-left: 1px solid #d3d2d0;
    border-top: 1px solid #d3d2d0;
}

.chev.up {
    transform: rotate(45deg) translate(4px, 4px);
    margin-left: 13px;
}

.chev.down {
    transform: rotate(225deg) translate(1px, 1px);
    margin-left: 24px;
}

.find-all {
    margin-left: 15px;
    color: #c9c8c6;
    font-size: 13px;
}

.check {
    flex: none;
    width: 15px;
    height: 15px;
    box-sizing: border-box;
    margin: 0 9px 0 14px;
    background: #fff;
    border: 1px solid #a9a8a6;
    border-radius: 3px;
}

.second-check {
    margin-left: 9px;
    margin-right: 10px;
}

.find-label {
    color: #4a5058;
    font-size: 15px;
    letter-spacing: 0.23px;
}

.sep.small {
    height: 25px;
}

.search {
    width: 21px;
    height: 21px;
    margin-left: 6px;
    margin-right: 6px;
}
```
